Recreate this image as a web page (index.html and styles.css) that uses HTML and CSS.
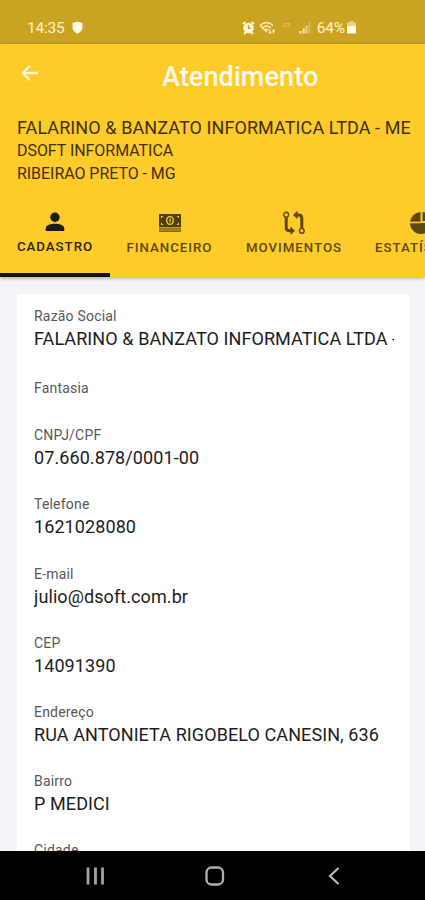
FILE: index.html
```html
<!DOCTYPE html>
<html lang="pt-BR">
<head>
    <meta charset="UTF-8">
    <meta name="viewport" content="width=device-width, initial-scale=1.0">
    <title>Atendimento</title>
    <link rel="stylesheet" href="styles.css">
</head>
<body>
    <div class="status-bar">
        <span class="clock">14:35</span>
        <svg class="shield" width="11" height="13" viewBox="0 0 11 13"><path d="M5.5 0.5 L10.5 2 V6.500 C10.500 9.500 8 11.500 5.500 12.700 C3 11.500 0.500 9.500 0.500 6.500 V2 Z" fill="#fffbe8"/></svg>
        <div class="status-icons">
            <svg width="13" height="14" viewBox="0 0 13 14">
                <path d="M1 3 L3.500 1 M12 3 L9.500 1 M2 13 L4 11 M11 13 L9 11" stroke="#fff8dc" stroke-width="1.800"/>
                <circle cx="6.500" cy="7" r="5.300" fill="#fff8dc"/>
                <path d="M6.500 4 V7.300 H9" stroke="#c9a024" stroke-width="1.300" fill="none"/>
            </svg>
            <svg class="wifi" width="17" height="14" viewBox="0 0 17 14" fill="none" stroke="#fbeebb" stroke-width="1.400">
                <path d="M1 4.500 Q7.500 -1.500 14 4.500 M3 7 Q7.500 3 12 7 M5.200 9.300 Q7.500 7.200 9.500 9.300"/>
                <path d="M1 4.500 L8 11"/>
                <path d="M11 8.500 V12 M9.700 10.800 L11 12.300 L12.300 10.800 M14.500 12.500 V9 M13.200 10.300 L14.500 8.800 L15.800 10.300" stroke-width="1.100"/>
            </svg>
            <span class="lte">LTE</span>
            <svg class="signal" width="12" height="12" viewBox="0 0 12 12">
                <path d="M0.500 9 h2 v2.500 h-2 Z M3.700 6.500 h2 v5 h-2 Z" fill="#fbeebb"/>
                <path d="M6.500 3.500 h2 v8 h-2 Z" fill="#ead58c"/>
                <path d="M9.400 0.500 h2 v11 h-2 Z" fill="#d8b957"/>
            </svg>
            <span class="battery-text">64%</span>
            <svg class="battery" width="9" height="13" viewBox="0 0 9 13"><path d="M2.500 0 h4 v1.500 h2.500 v3.500 h-9 v-3.500 h2.500 Z" fill="#e9d48c"/><path d="M0 5 h9 v6.500 q0 1 -1 1 h-7 q-1 0 -1 -1 Z" fill="#fffbe8"/></svg>
        </div>
    </div>

    <header>
        <div class="toolbar">
            <svg class="back" width="18" height="18" viewBox="0 0 18 18"><path d="M17 9 H1.800 M9 1.800 L1.800 9 L9 16.200" fill="none" stroke="#fff6d2" stroke-width="2.300"/></svg>
            <h1>Atendimento</h1>
        </div>
        <div class="client">
            <p class="client-name">FALARINO &amp; BANZATO INFORMATICA LTDA - ME</p>
            <p class="client-info">DSOFT INFORMATICA</p>
            <p class="client-info">RIBEIRAO PRETO - MG</p>
        </div>
        <nav>
            <a class="tab tab-cadastro active">
                <svg width="20" height="20" viewBox="0 0 20 20" fill="#1d1b19"><circle cx="10" cy="5.200" r="4.700"/><path d="M0.700 19 V16.500 C0.700 13 6 11.700 10 11.700 S19.300 13 19.300 16.500 V19 Z"/></svg>
                <span>CADASTRO</span>
            </a>
            <a class="tab tab-financeiro">
                <svg width="22" height="20" viewBox="0 0 22 20">
                    <path d="M0 1 h22 v13 h-22 Z" fill="#4d3f0c"/>
                    <path d="M0 14 h22 v5 h-22 Z" fill="#c79f22"/>
                    <path d="M0 15.200 h22 v1.300 h-22 Z M0 17.600 h22 v1.300 h-22 Z" fill="#80691a"/>
                    <ellipse cx="11" cy="7.500" rx="4" ry="4.600" fill="#ffcb2b"/>
                    <ellipse cx="11" cy="7.500" rx="2.600" ry="3.300" fill="#4d3f0c"/>
                    <path d="M10.500 5.500 h1.200 v4 h-1.200 Z" fill="#ffcb2b"/>
                    <path d="M2 3 h2.500 l-2.500 2.500 Z M20 3 h-2.500 l2.500 2.500 Z M2 12 h2.500 l-2.500 -2.500 Z M20 12 h-2.500 l2.500 -2.500 Z" fill="#ffcb2b"/>
                </svg>
                <span>FINANCEIRO</span>
            </a>
            <a class="tab tab-movimentos">
                <svg width="24" height="24" viewBox="0 0 24 24" fill="none" stroke="#5c490d">
                    <circle cx="4.200" cy="3.700" r="2.400" stroke-width="1.400"/>
                    <circle cx="19.800" cy="19.800" r="2.400" stroke-width="1.400"/>
                    <path d="M4.200 6 V16.500 Q4.200 19.800 7.500 19.800 H9" stroke-width="3"/>
                    <path d="M19.800 17.500 V7.500 Q19.800 4 16.500 4 H14.500" stroke-width="3"/>
                    <path d="M8.500 15.500 L13 19.800 L8.500 24 Z M15.500 -0.300 L11 4 L15.500 8.300 Z" fill="#5c490d" stroke="none"/>
                </svg>
                <span>MOVIMENTOS</span>
            </a>
            <a class="tab tab-estatisticas">
                <svg width="24" height="22" viewBox="0 0 24 22" fill="#5c490d"><path d="M10.500 0 V11 H22 A11 11 0 0 1 0 11 A11 11 0 0 1 10.500 0 Z" /><path d="M12.500 0 A10.500 10.500 0 0 1 22 9 H12.500 Z"/><path d="M0 10.500 H10.500" stroke="#ffcb2b" stroke-width="1.600"/></svg>
                <span>ESTATÍSTICAS</span>
            </a>
        </nav>
    </header>

    <main>
        <div class="card">
            <div class="field first">
                <label>Razão Social</label>
                <p>FALARINO &amp; BANZATO INFORMATICA LTDA - ME</p>
            </div>
            <div class="field empty">
                <label>Fantasia</label>
            </div>
            <div class="field">
                <label>CNPJ/CPF</label>
                <p>07.660.878/0001-00</p>
            </div>
            <div class="field">
                <label>Telefone</label>
                <p>1621028080</p>
            </div>
            <div class="field">
                <label>E-mail</label>
                <p>julio@dsoft.com.br</p>
            </div>
            <div class="field">
                <label>CEP</label>
                <p>14091390</p>
            </div>
            <div class="field">
                <label>Endereço</label>
                <p>RUA ANTONIETA RIGOBELO CANESIN, 636</p>
            </div>
            <div class="field">
                <label>Bairro</label>
                <p>P MEDICI</p>
            </div>
            <div class="field">
                <label>Cidade</label>
            </div>
        </div>
    </main>

    <footer>
        <svg width="18" height="18" viewBox="0 0 18 18"><path d="M2 0.500 V17.500 M9.500 0.500 V17.500 M16.500 0.500 V17.500" stroke="#a4a4a4" stroke-width="2.800"/></svg>
        <svg class="home" width="20" height="20" viewBox="0 0 20 20"><rect x="1.500" y="1.500" width="16.500" height="17" rx="5" fill="none" stroke="#b0b0b0" stroke-width="2.300"/></svg>
        <svg width="12" height="18" viewBox="0 0 12 18"><path d="M10.500 1 L2 9 L10.500 17" fill="none" stroke="#b8b8b8" stroke-width="2.200"/></svg>
    </footer>
</body>
</html>
```

FILE: styles.css
```css
/* Reset default styles */
body, h1, p {
    margin: 0;
    padding: 0;
}

* {
    box-sizing: border-box;
}

svg {
    display: block;
    flex-shrink: 0;
}

body {
    font-family: Roboto, "Liberation Sans", sans-serif;
    background-color: #f3f5f9;
    height: 900px;
    display: flex;
    flex-direction: column;
    overflow: hidden;
}

/* Status bar */
.status-bar {
    height: 44px;
    flex-shrink: 0;
    background-color: #cba323;
    color: #fff3c8;
    display: flex;
    align-items: center;
    padding: 11px 69px 0 27px;
    font-size: 15.500px;
    letter-spacing: -0.2px;
}

.shield {
    margin-left: 7px;
}

.status-icons {
    display: flex;
    align-items: center;
    margin-left: auto;
}

.wifi {
    margin-left: 4px;
}

.lte {
    width: 12px;
    margin: -5px 0 0 7px;
    font-size: 5px;
    color: #e5cd82;
}

.signal {
    margin-left: 4px;
}

.battery-text {
    margin-left: 6px;
}

.battery {
    margin-left: 2px;
}

/* Header */
header {
    height: 233px;
    flex-shrink: 0;
    background-color: #ffcb2b;
    box-shadow: 0 1px 4px rgba(0, 0, 0, 0.35);
    position: relative;
}

.toolbar {
    height: 66px;
    display: flex;
    align-items: center;
    padding: 0 21px;
}

.back {
    margin-top: -8px;
}

h1 {
    margin-left: 123px;
    font-size: 27px;
    line-height: 30px;
    font-weight: 500;
    letter-spacing: 0.1px;
    color: #fffbea;
}

.client {
    padding: 7px 0 0 17px;
    height: 86px;
    white-space: nowrap;
    color: #3d310a;
}

.client-name {
    font-size: 18px;
    line-height: 22px;
    letter-spacing: 0.090px;
}

.client-info {
    font-size: 16px;
    line-height: 23px;
    letter-spacing: -0.050px;
}

/* Tabs */
nav {
    display: flex;
    height: 81px;
    overflow: hidden;
}

.tab {
    flex-shrink: 0;
    display: flex;
    flex-direction: column;
    align-items: center;
    font-size: 13.300px;
    line-height: 16px;
    font-weight: 500;
    letter-spacing: 0.950px;
    color: #5c490d;
}

.tab svg {
    height: 24px;
}

.tab span {
    margin-top: 5px;
}

.tab-cadastro {
    width: 110px;
    padding-top: 14px;
}

.tab-financeiro {
    width: 119px;
    padding-top: 15px;
}

.tab-movimentos {
    width: 130px;
    padding-top: 15px;
}

.tab-estatisticas {
    width: 132px;
    padding-top: 15px;
}

.tab-estatisticas svg {
    margin-right: 6px;
}

.tab.active {
    color: #2b240c;
    border-bottom: 4px solid #17130d;
}

/* Client data */
main {
    flex: 1;
    min-height: 0;
    padding: 17px 15px 0 17px;
    overflow: hidden;
}

.card {
    background-color: #fff;
    border-radius: 3px;
    padding: 13.300px 16px 0 17px;
}

.field {
    height: 69.150px;
}

.field.first {
    height: 71.500px;
}

.field.empty {
    height: 47.500px;
}

.field label {
    display: block;
    font-size: 14px;
    line-height: 18px;
    letter-spacing: 0.200px;
    color: #585858;
}

.field p {
    font-size: 18px;
    line-height: 27px;
    letter-spacing: 0.090px;
    color: #1c1c1c;
    white-space: nowrap;
    overflow: hidden;
}

/* Navigation bar */
footer {
    height: 49px;
    flex-shrink: 0;
    background-color: #000;
    display: flex;
    align-items: center;
    justify-content: space-between;
    padding: 0 85px 0 86px;
}

.home {
    margin-right: 3px;
}
```
